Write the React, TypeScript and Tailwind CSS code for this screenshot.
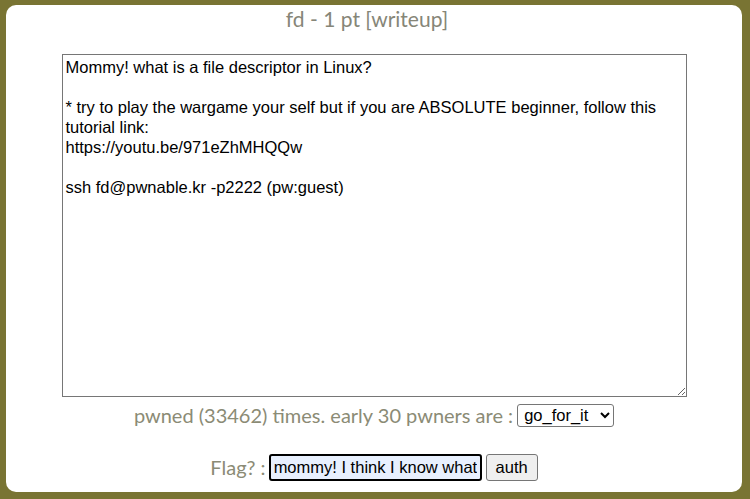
import { useState } from 'react';

const challengeText = `Mommy! what is a file descriptor in Linux?

* try to play the wargame your self but if you are ABSOLUTE beginner, follow this tutorial link:
https://youtu.be/971eZhMHQQw

ssh fd@pwnable.kr -p2222 (pw:guest)`;

const App = () => {
    const [flag, setFlag] = useState('mommy! I think I know what a file descriptor is!!');

    return (
        <div className="h-[499px] w-[750px] bg-[#797433] pt-[5px] pl-[6px] pr-[8px] pb-[7px]">
            <div className="h-full w-full bg-white rounded-[10px] flex flex-col items-center font-['Lato','Liberation_Sans',sans-serif]">
                <div className="h-[28px] leading-[28px] pr-[14px] text-[21px] text-[#868678]">
                    fd - 1 pt [writeup]
                </div>
                <textarea
                    readOnly
                    value={challengeText}
                    className="mt-[21px] w-[625px] h-[343px] border border-[#767676] bg-white px-[3px] py-[2px] text-[16.5px] leading-[20px] text-black font-['Liberation_Sans',Arial,sans-serif] resize"
                />
                <div className="mt-[6px] h-[24px] flex items-center gap-[4px] text-[20px] text-[#8b8b75]">
                    <span>pwned (33462) times. early 30 pwners are :</span>
                    <select className="h-[23px] w-[97px] border border-[#767676] rounded-[3px] bg-white text-black text-[16.5px] font-['Liberation_Sans',Arial,sans-serif] pl-[2px]">
                        <option>go_for_it</option>
                    </select>
                </div>
                <div className="mt-[25px] flex items-center text-[20px] text-[#8b8b75]">
                    <span className="mr-[3px]">Flag? :</span>
                    <input
                        value={flag}
                        onChange={(e) => setFlag(e.target.value)}
                        className="h-[27px] w-[213px] border-2 border-black rounded-[3px] bg-[#e8f0fe] px-[3px] text-[16.5px] text-black font-['Liberation_Sans',Arial,sans-serif] outline-none"
                    />
                    <button className="ml-[4px] h-[27px] w-[52px] border border-[#767676] rounded-[3px] bg-[#efefef] text-[16.5px] text-black font-['Liberation_Sans',Arial,sans-serif]">
                        auth
                    </button>
                </div>
            </div>
        </div>
    );
};

export default App;
